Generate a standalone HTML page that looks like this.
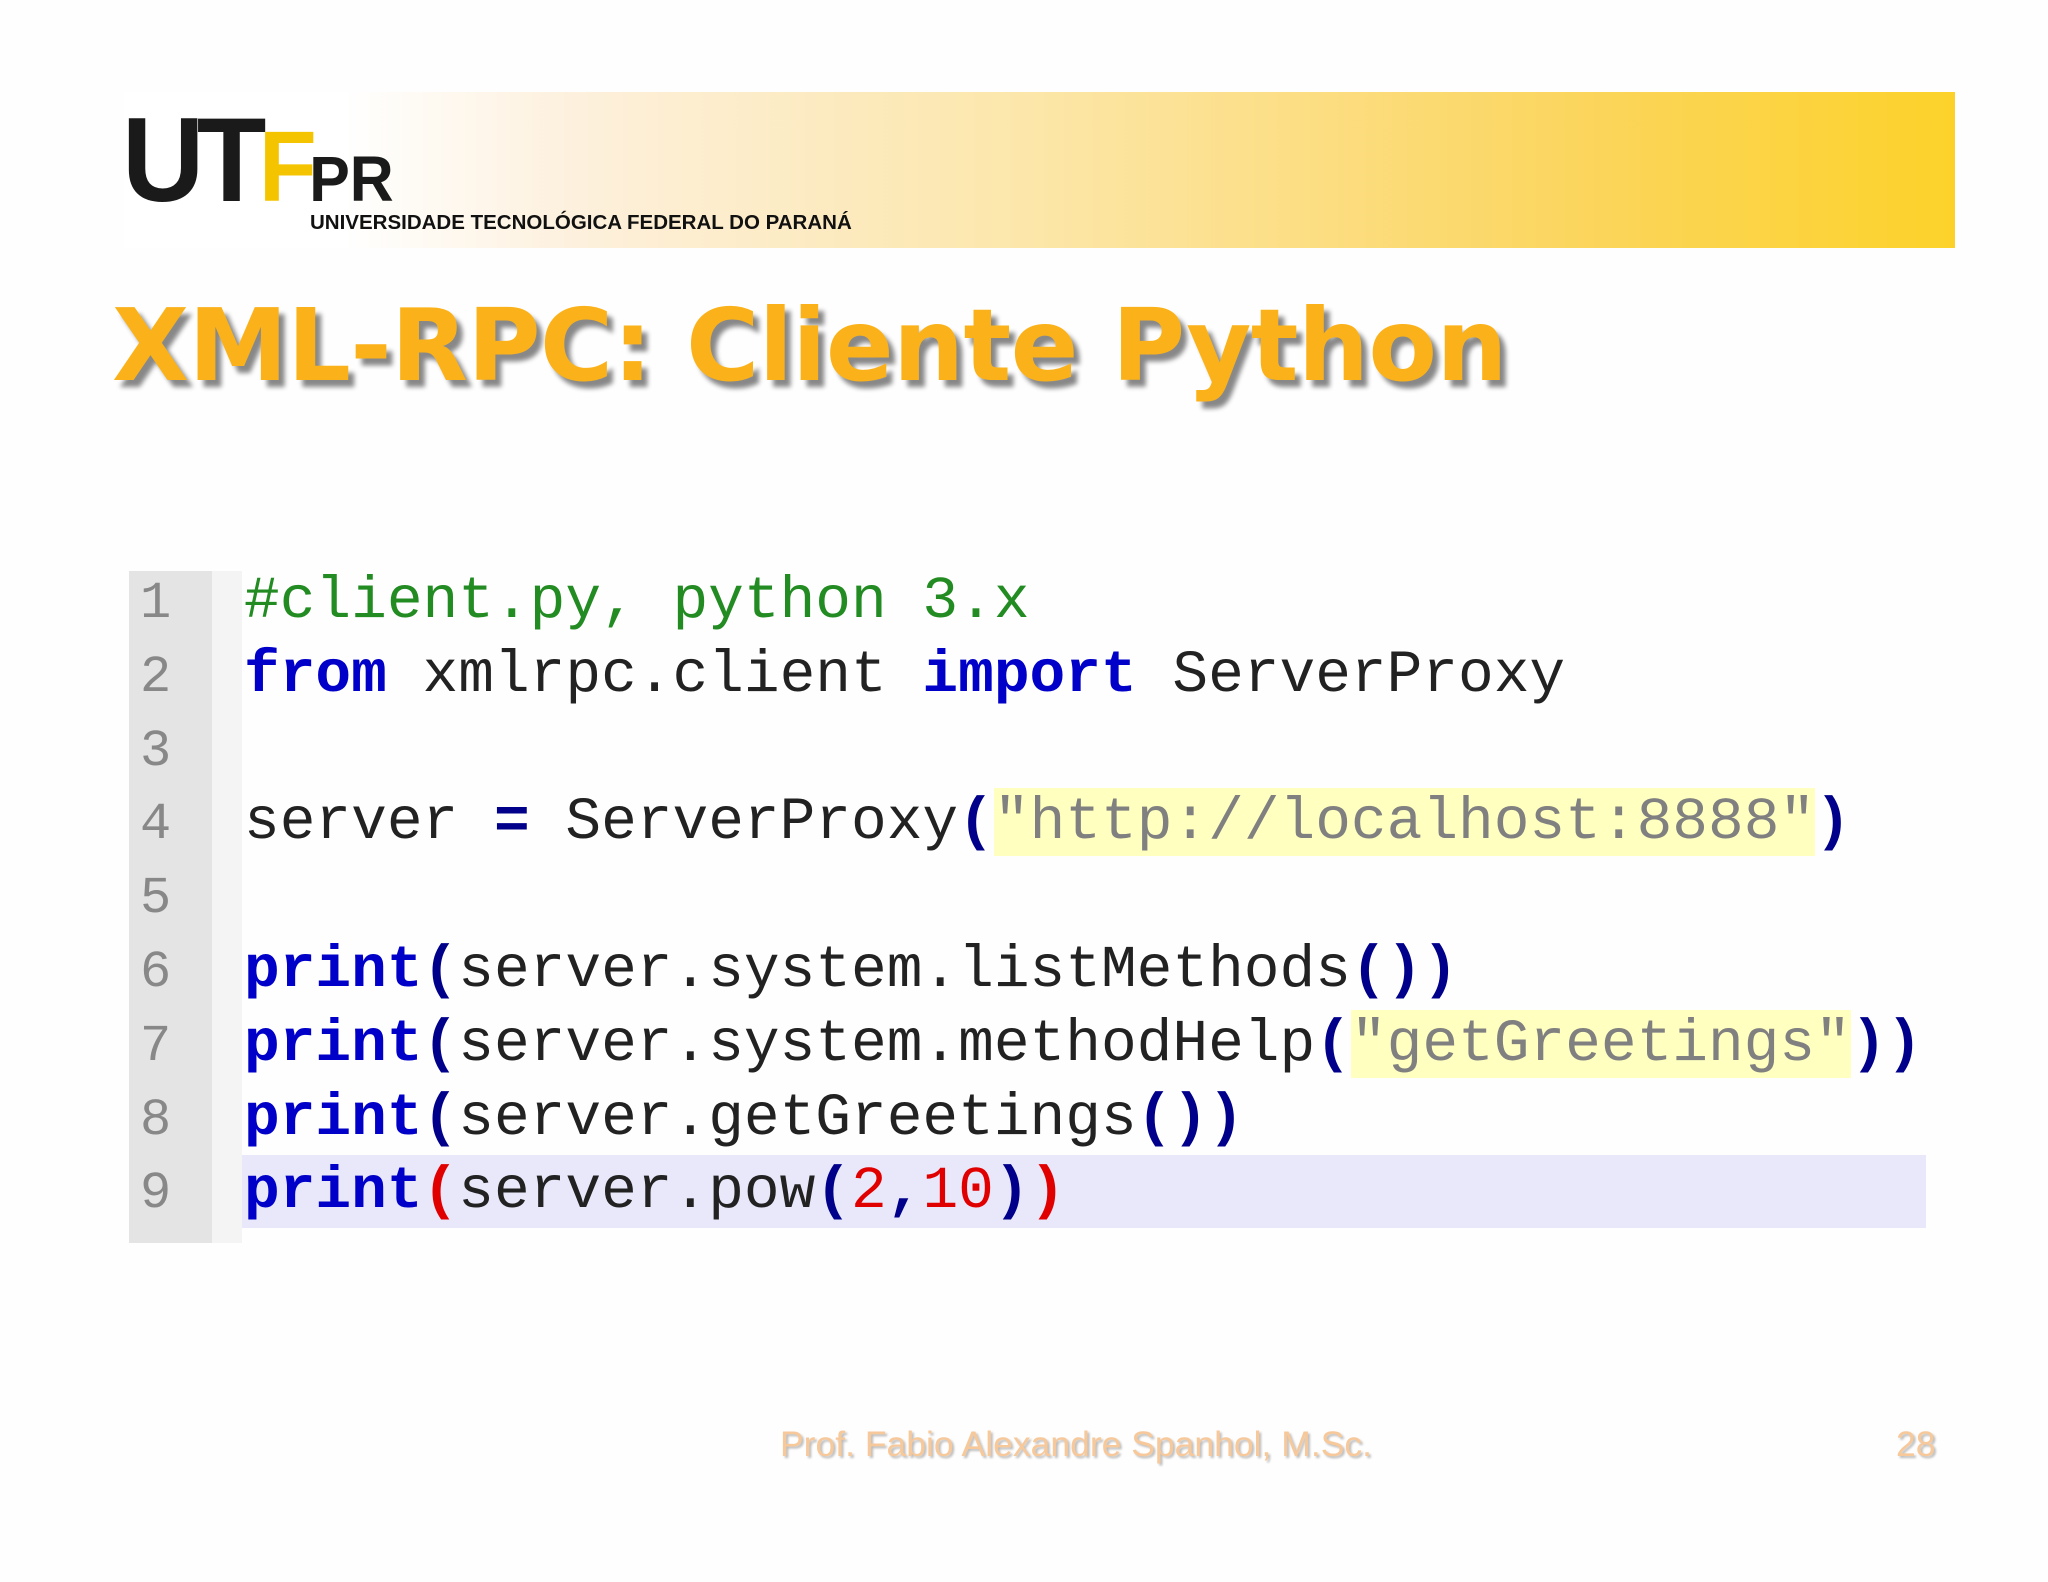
<!DOCTYPE html>
<html><head><meta charset="utf-8"><style>
body{margin:0;width:2048px;height:1582px;background:#fefefe;position:relative;overflow:hidden;font-family:"Liberation Sans",sans-serif}
.band{position:absolute;left:124px;top:92px;width:1831px;height:156px;background:linear-gradient(90deg,#fff 0%,#fff 12%,#fdf0dc 25%,#fce6a8 50%,#fbd55c 80%,#fcd22a 100%)}
.logo{position:absolute;left:122px;top:100px;font:bold 120px/1 "Liberation Sans",sans-serif;color:#1a1a1a;letter-spacing:-8px;transform:scaleX(0.95);transform-origin:left}
.sub{position:absolute;left:310px;top:213px;font:bold 20.5px/1 "Liberation Sans",sans-serif;color:#111;white-space:nowrap}
.title{position:absolute;left:112px;top:296px;font:bold 100px/1 "DejaVu Sans",sans-serif;color:#fbb21a;text-shadow:6px 7px 5px #888;white-space:nowrap;letter-spacing:-0.7px}
.gut{position:absolute;left:129px;top:571px;width:83px;height:672px;background:#e4e4e4}
.gut2{position:absolute;left:212px;top:571px;width:30px;height:672px;background:#f4f4f4}
.hl{position:absolute;left:242px;top:1155px;width:1684px;height:73px;background:#e8e8fa}
.ln,.cl{position:absolute;font-family:"Liberation Mono",monospace;white-space:pre;line-height:1}
.ln{left:140px;font-size:52px;color:#888}
.cl{left:244px;font-size:59.5px;color:#222}
.k{color:#0000c8;font-weight:bold}
.c{color:#228b22}
.s{color:#808080;background:#ffffc0}
.p{color:#00008b;font-weight:bold}
.r{color:#e00000}
.foot{position:absolute;top:1427px;font:35.5px/1 "Liberation Sans Narrow","Liberation Sans",sans-serif;color:#f7c89a;text-shadow:2px 2px 2px #bbb;white-space:nowrap}
</style></head><body>
<div class="band"></div>
<div class="logo">U<span style="color:#1a1a1a">T</span><span style="color:#f5c400;font-size:100px">F</span><span style="font-size:64px;letter-spacing:0">PR</span></div>
<div class="sub">UNIVERSIDADE TECNOLÓGICA FEDERAL DO PARANÁ</div>
<div class="title">XML-RPC: Cliente Python</div>
<div class="gut"></div><div class="gut2"></div><div class="hl"></div>
<div class="ln" style="top:578px">1</div>
<div class="ln" style="top:652px">2</div>
<div class="ln" style="top:726px">3</div>
<div class="ln" style="top:799px">4</div>
<div class="ln" style="top:873px">5</div>
<div class="ln" style="top:947px">6</div>
<div class="ln" style="top:1021px">7</div>
<div class="ln" style="top:1095px">8</div>
<div class="ln" style="top:1168px">9</div>
<div class="cl" style="top:572px"><span class="c">#client.py, python 3.x</span></div>
<div class="cl" style="top:646px"><span class="k">from</span> xmlrpc.client <span class="k">import</span> ServerProxy</div>
<div class="cl" style="top:793px">server <span class="p">=</span> ServerProxy<span class="p">(</span><span class="s">"http://localhost:8888"</span><span class="p">)</span></div>
<div class="cl" style="top:941px"><span class="k">print</span><span class="p">(</span>server.system.listMethods<span class="p">())</span></div>
<div class="cl" style="top:1015px"><span class="k">print</span><span class="p">(</span>server.system.methodHelp<span class="p">(</span><span class="s">"getGreetings"</span><span class="p">))</span></div>
<div class="cl" style="top:1089px"><span class="k">print</span><span class="p">(</span>server.getGreetings<span class="p">())</span></div>
<div class="cl" style="top:1162px"><span class="k">print</span><span class="r" style="font-weight:bold">(</span>server.pow<span class="p">(</span><span class="r">2</span><span class="p">,</span><span class="r">10</span><span class="p">)</span><span class="r" style="font-weight:bold">)</span></div>
<div class="foot" style="left:780px">Prof. Fabio Alexandre Spanhol, M.Sc.</div>
<div class="foot" style="left:1896px">28</div>
</body></html>
